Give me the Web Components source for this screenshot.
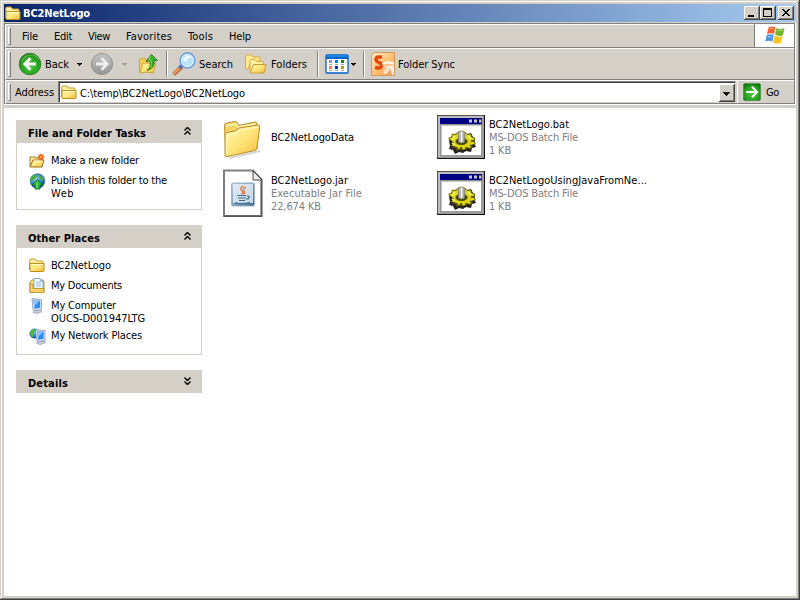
<!DOCTYPE html>
<html lang="en"><head><meta charset="utf-8"><title>BC2NetLogo</title>
<style>
html,body{margin:0;width:800px;height:600px;overflow:hidden;background:#d4d0c8}
body{font:11px/13px "DejaVu Sans Condensed","DejaVu Sans",sans-serif;font-stretch:condensed;color:#000;cursor:default}
</style></head><body>
<xp-window></xp-window>
<script>
const GEAR = `<path fill="#9c9c9c" d="M0 0h48v44H0z"/><path d="M0 44V0h48" fill="none" stroke="#555" stroke-width="2"/><path d="M48 0v44H0" fill="none" stroke="#111" stroke-width="2"/><path d="M2 42V2h44" fill="none" stroke="#ddd"/><path fill="#fff" d="M4 10h40v30H4z"/><path fill="#000084" d="M3 3h42v6H3z"/><path fill="#c6c6c6" d="M32 4.500h3v3h-3zM37 4.500h3v3h-3zM42 4.500h2.500v3H42z"/><path d="M4 40V10h41" stroke="#888" fill="none"/><path fill="#222" d="M12 25l3-4 3-2 6-2 7 2 3-1 2 4 2 2-1 4 2 4-4 1-1 4-5-1-3 2-4-1-4 2-2-4-4-1 1-3z"/><path fill="#dcd418" stroke="#5e5800" stroke-width=".8" d="M11.500 23l3.500-1 0-3 4 .5 2-2.500h7l2 2.500 4-.5.500 3 3.500 1-1.500 3 2 3-4 1-.5 3.500-4.500-1-2.500 2.500-3-1.500-4 1.500-1.500-3-4-1 1.500-3.500z"/><path d="M15 25l3-4M31 21l3 3M15 28l3 2" stroke="#fff86a" stroke-width="1.500"/><ellipse cx="24.500" cy="26.500" rx="6" ry="3.500" fill="#4a4600"/><path d="M17 31l-1 3M20 32v4M24 32v4M29 32l1 3M33 30l3 2M34 26h4" stroke="#4d480a" stroke-width="1.400"/><path fill="#d0d0d0" stroke="#777" stroke-width=".8" d="M21.500 19q0-3 3-3t3 3v8q-3 2-6 0z"/><path d="M26.300 18v9M23 19v8" stroke="#999" stroke-width=".8"/><path d="M24.500 17v10" stroke="#fff"/>`;
const FOLD = `<path fill="#fff0a0" stroke="#c39a2b" d="M.7 12V2.200Q.7 1 2 1h4l1.500 2H13q1 0 1 1v2"/><path fill="url(#y)" stroke="#bd8d19" d="M1 13V5.500h14V12.500q0 1-1.200 1H1.500z"/><path d="M2 6.500h12" stroke="#fffbd0"/>`;
const DEF = `<defs><linearGradient id="y" x1="0" y1="0" x2="1" y2="1"><stop stop-color="#fff9b0"/><stop offset=".5" stop-color="#ffe57a"/><stop offset="1" stop-color="#f0b93c"/></linearGradient><radialGradient id="g" cx=".5" cy=".6" r=".65"><stop stop-color="#4cc83c"/><stop offset=".65" stop-color="#28a020"/><stop offset="1" stop-color="#157012"/></radialGradient><linearGradient id="s" x1="0" y1="0" x2="0" y2="1"><stop stop-color="#c4c4c4"/><stop offset="1" stop-color="#969696"/></linearGradient><radialGradient id="w" cx=".4" cy=".35" r=".7"><stop stop-color="#9fd4ff"/><stop offset=".6" stop-color="#2975d0"/><stop offset="1" stop-color="#123f99"/></radialGradient><linearGradient id="o" x1="0" y1="0" x2="1" y2="1"><stop stop-color="#fff0d5"/><stop offset=".5" stop-color="#ffc478"/><stop offset="1" stop-color="#f7913d"/></linearGradient><linearGradient id="b" x1="0" y1="0" x2="1" y2="1"><stop stop-color="#b6cfe4"/><stop offset="1" stop-color="#3c6c94"/></linearGradient></defs>`;
const SCREEN = `<path fill="#c9cfdd" stroke="#8993ad" stroke-width=".7" d="M5 12.500l6-1 2 2-5 2-4-1z"/><path fill="#e8ebf5" stroke="#7983a5" stroke-width=".7" d="M3 .5l9.500 1.200V11.500L6 12.500 4 11.500z"/><path fill="#2d8df5" d="M4.200 1.800l7 1v7L5.700 11z"/><path fill="#86c8ff" d="M4.500 2l6.300.8-5.400 5.200z"/>`;
const ICONS = {
 folder:[16,15,FOLD],
 back:[24,24,`<circle cx="12" cy="12" r="10.800" fill="url(#g)" stroke="#28782b" stroke-width=".8"/><path d="M4 9q3-6 9-6t8 5" fill="none" stroke="#8edb80" stroke-width="1.200" opacity=".6"/><path d="M12.500 6.300L6.900 12l5.600 5.700M7.500 12H18" fill="none" stroke="#fff" stroke-width="3"/>`],
 fwd:[24,24,`<circle cx="12" cy="12" r="10.600" fill="url(#s)" stroke="#888" stroke-width=".8"/><path d="M11.500 6.300L17.100 12l-5.600 5.700M16.500 12H6" fill="none" stroke="#eee" stroke-width="2.800"/>`],
 up:[20,22,`<path fill="#f5cf55" stroke="#d0a23a" d="M1.500 19V6l5-1 1 2 8-1v13z"/><path fill="url(#y)" stroke="#d0a23a" d="M2 20l3-10 13 .5L15 20q-6-2-13 0z"/><path fill="#39ae29" stroke="#197018" stroke-width=".8" d="M9 17.500q4.500-3 3-9.500L8 8.500l5.500-7 6 6-3.500.4Q17.500 15 9 17.500z"/><path d="M13.300 3l-3 4 2.800.2q1 4-.5 8" fill="none" stroke="#8ade65" stroke-width=".8"/>`],
 search:[24,24,`<path d="M10 14.500l-8.300 7.800" stroke="#a95d35" stroke-width="4"/><path d="M9.500 14.500l-8 7.400" stroke="#ee9b60" stroke-width="2.500"/><path d="M7 16l3.500-3.200" stroke="#4971b9" stroke-width="3"/><circle cx="15.500" cy="8.500" r="7.400" fill="#b9e2ff" stroke="#6d9cd9" stroke-width="1.500"/><circle cx="15.500" cy="8.500" r="6" fill="none" stroke="#e7f8ff"/><path d="M11 8q1-4 5-4 3 0 4 2-4-1-5 2-1 3-4 0z" fill="#fff" opacity=".85"/>`],
 folders:[22,22,`<path fill="#ffe988" stroke="#d6ac45" d="M.5 16V3l1-1h5l1.500 2h7v4L6 9 3 16z"/><path fill="#fff0a0" stroke="#d6ac45" d="M5 18V7.500l1-1h4l1.500 2h6.500v3"/><path fill="url(#y)" stroke="#cc9d32" d="M5 20L8.500 11.500h12.500L19 20z"/>`],
 views:[24,20,`<rect x="1" y="1" width="22" height="18" rx="1" fill="#fff" stroke="#0060c8" stroke-width="1.300"/><path fill="#0068d0" d="M1 1h22v4H1z"/><path d="M2 2h20" stroke="#3ba0f0"/><path fill="#9898c8" d="M4 6h3v3H4z"/><path fill="#0080e0" d="M10 6h3v3h-3z"/><path fill="#009800" d="M16 6h3v3h-3z"/><path fill="#ff7840" d="M4 12h3v3H4z"/><path fill="#0038a0" d="M10 12h3v3h-3z"/><path fill="#c89800" d="M16 12h3v3h-3z"/><path d="M4 10.500h3m3 0h3m3 0h3M4 16.500h3m3 0h3m3 0h3" stroke="#aaa"/>`],
 sync:[24,24,`<path d="M.5 4Q1 1 4 .5h19.500v23H.500z" fill="url(#o)" stroke="#d79a5b"/><path d="M11 5.300Q4.800 4 5 7.500q.1 2 3 3 3 1 2.800 3.300-.4 3.200-6.800 1.600" fill="none" stroke="#e24c0c" stroke-width="3.600"/><path d="M11 11l6-2 6 1v3l-5-1-6 2zM12 15l9-2 2 1v9h-2l-2-6-4 5-3-1 4-6-4 1z" fill="#fff" opacity=".85"/><path d="M12 13l6-1 4 2M14 20l4-5M19 16l2 6" stroke="#f3b77c" stroke-width=".8" fill="none"/>`],
 go:[18,18,`<rect x=".5" y=".5" width="17" height="17" rx="1.500" fill="url(#g)" stroke="#4c9a50"/><path d="M9 3.800l5 5.200-5 5.200M13.500 9H3" fill="none" stroke="#fff" stroke-width="2.200"/>`],
 flag:[20,19,`<path fill="#ee6331" d="M3.500 1.500q4-2 7 0L9 8Q6 6.500 2 8z"/><path fill="#73b52b" d="M11.500 2q3.500 2 8 0L18 9q-4 2-8-.5z"/><path fill="#4b91e5" d="M1.800 9q4-1.700 7 0L7.300 15.500Q4 14 .3 15.500z"/><path fill="#f9c623" d="M9.800 9.500q4 2 8 .5L16 17q-4 2-8-.8z"/><path d="M4 3q3-1.500 5 0" stroke="#ffa17b" fill="none"/><path d="M12 4q3 1 6 0" stroke="#b2dc71" fill="none"/><path d="M3 11q2-1 4 0" stroke="#a3cfff" fill="none"/>`],
 newf:[17,16,`<path fill="#ffeda0" stroke="#a47a24" d="M1 13V4h5l1 1h6v3"/><path fill="url(#y)" stroke="#9a7020" d="M1 14L4 7h11l-2 7z"/><path d="M5 8h8" stroke="#fffbe0"/><path fill="#f25d22" d="M12 0l1 2 2-1-1 2 2 1-2 1 1 2-2-1-1 2-1-2-2 1 1-2-2-1 2-1-1-2 2 1z"/><circle cx="12" cy="4" r="1" fill="#ffd04d"/>`],
 web:[17,17,`<circle cx="8.500" cy="8" r="7.300" fill="url(#w)" stroke="#204e94" stroke-width=".6"/><path fill="#4bae43" d="M3 3l4-2 2 2-3 3-3 2-1 3q-2-4 1-8zM11 2q4 2 4 6l-3-1-2-3z"/><path fill="#2ab532" stroke="#0b6516" stroke-width=".8" d="M6 16v-4H3l5.500-5.500L14 12h-3v4z"/><path d="M8 9v6" stroke="#86ec78"/>`],
 docs:[17,16,`<path fill="#ffe784" stroke="#b78b21" d="M1 14V4l2-2h11l1 2v10z"/><path fill="#f4faff" stroke="#6395c8" stroke-width=".8" d="M5 .5h6l3 3V12H5z"/><path fill="#8abdf0" d="M11 1v3h3z"/><path d="M7 4h4M7 6h5M7 8h5" stroke="#79a9df" stroke-width=".8"/><path fill="#f7d369" stroke="#b78b21" stroke-width=".8" d="M1 14.500V6h3v4.500h11v4z"/>`],
 comp:[16,16,SCREEN],
 net:[17,17,`<circle cx="5.500" cy="5.500" r="5" fill="url(#w)"/><path fill="#4bb844" d="M1 4l3-3 3 1-2 3-1 4-2-1z"/><g transform="translate(3.500 1)">${SCREEN}</g>`],
 big:[48,48,`<path fill="#bbb" opacity=".6" d="M9 44l32-7v2L11 46z"/><path fill="#f5d365" stroke="#b38a2c" d="M5.500 12.500q0-2 2-2.500l9-1.500q1.500 0 2.300 2l1 2L36 9q2 0 2 2v24L7 43z"/><path d="M7 13l10-2 2 3 17-3" fill="none" stroke="#fff6bb" stroke-width="1.500"/><path fill="url(#y)" stroke="#b98c26" d="M6 43V22q0-2 2-2.500l8-1.500 4-3 19-3q2 0 1.700 2L38 35q0 2-2 2.500L8 43.500q-2 .5-2-.5z"/><path d="M8 41V22l9-2 4-3 18-3" fill="none" stroke="#fffbd0" stroke-width="1.200"/>`],
 jar:[48,48,`<path fill="#fff" stroke="#808080" stroke-width="2" d="M5 1.500h29l8.500 9V47H5z"/><path d="M42.500 11v36.300H5" stroke="#555" stroke-width="1.400" fill="none"/><path fill="#eee" stroke="#444" d="M34 2v9h9z"/><rect x="12.500" y="14" width="23" height="23" rx="1.500" fill="url(#b)" stroke="#9ab5cb"/><rect x="14" y="15" width="20" height="19" fill="#edf3f8" opacity=".78"/><path d="M24 17q-4 3-1 5 2 2-1 3M27 18q-4 2-2 4 2 2-1 3" fill="none" stroke="#e4733b" stroke-width="1.300"/><path d="M18 26.500h9M19 29h8M20 31.500h6M28 27q4 0 1 3h-2M16 33.500q6 2 15 0" fill="none" stroke="#426a91" stroke-width="1.200"/>`],
 bat:[48,44,GEAR]
};
const def=(n,html)=>customElements.define(n,class extends HTMLElement{connectedCallback(){if(!this.shadowRoot)this.attachShadow({mode:'open'}).innerHTML=html(this)}});
def('xp-icon',e=>{const [w,h,p]=ICONS[e.getAttribute('name')];return `<style>:host{display:block;flex:none}svg{display:block}</style><svg width="${w}" height="${h}" viewBox="0 0 ${w} ${h}">${DEF}${p}</svg>`});
/* A text line whose tracking is adjusted to a given advance width. */
customElements.define('xp-text',class extends HTMLElement{connectedCallback(){
 this.attachShadow({mode:'open'}).innerHTML='<style>:host{display:block;white-space:nowrap;flex:none;height:13px}span{display:inline-block}</style><span><slot></slot></span>';
 const w=+this.getAttribute('w');this.style.width=w+'px';
 const s=this.shadowRoot.querySelector('span'),n=this.textContent.length;
 s.style.letterSpacing=((w-s.getBoundingClientRect().width)/n).toFixed(3)+'px';
}});
def('xp-arrow',e=>`<style>:host{display:block;flex:none;width:5px;height:3px}svg{display:block}</style><svg width="5" height="3" shape-rendering="crispEdges"><path fill="${e.getAttribute('color')||'#000'}" d="M0 0h5v1H0zM1 1h3v1H1zM2 2h1v1H2z"/></svg>`);
def('xp-sep',()=>`<style>:host{display:block;flex:none;width:1px;height:26px;background:#808080;border-right:1px solid #fff}</style>`);
def('xp-button',e=>{const g={min:'<path d="M4 9h6v2H4z"/>',max:'<path fill-rule="evenodd" d="M3 2h9v9H3zM4 4v6h7V4z"/>',close:'<path d="M4 3h2v1h1v1h2V4h1V3h2v1h-1v1h-1v1H9v1h1v1h1v1h1v1h-2V9H9V8H7v1H6v1H4V9h1V8h1V7h1V6H6V5H5V4H4z"/>',drop:'<path d="M4 8h7v1H4zM5 9h5v1H5zM6 10h3v1H6zM7 11h1v1H7z"/>'}[e.getAttribute('kind')];
 return `<style>:host{display:block;box-sizing:border-box;flex:none;width:16px;height:14px;background:#d4d0c8;box-shadow:inset -1px -1px #404040,inset 1px 1px #fff,inset -2px -2px #808080}svg{display:block}</style><svg width="16" height="14" shape-rendering="crispEdges">${g}</svg>`});
def('xp-bar',()=>`<style>:host{display:flex;box-sizing:border-box;position:relative;align-items:center;border-left:1px solid #fff;border-top:1px solid #fff;border-bottom:1px solid #808080}i{box-sizing:border-box;flex:none;width:3px;border:1px solid #808080;border-left-color:#fff;border-top-color:#fff;align-self:stretch;margin:2px 0 2px 2px}</style><i></i><slot></slot>`);
def('xp-panel',e=>{const o=e.hasAttribute('open');return `<style>:host{display:block}header{display:flex;box-sizing:border-box;height:23px;padding:3px 11px 0 12px;align-items:center;justify-content:space-between;background:#d4d0c8;font-weight:bold}section{display:${o?'grid':'none'};row-gap:7px;padding:11px 11px 12px 12px;border:1px solid #d4d0c8;border-top:0}svg{margin-top:-5px}</style><header><xp-text w="${e.getAttribute('w')}">${e.getAttribute('heading')}</xp-text><svg width="7" height="8" viewBox="0 0 7 8"><g fill="none" stroke="#000" stroke-width="1.400" ${o?'':'transform="rotate(180 3.5 4)"'}><path d="M.5 3.500l3-3 3 3M.5 7.500l3-3 3 3"/></g></svg></header><section><slot></slot></section>`});
def('xp-link',e=>`<style>:host{display:grid;grid-template-columns:22px auto}:host([double]){margin-bottom:-3px}xp-icon{margin-top:-1px;height:13px;overflow:visible}</style><xp-icon name="${e.getAttribute('icon')}"></xp-icon><div><slot></slot></div>`);
def('xp-file',e=>`<style>:host{display:flex;height:48px;align-items:center}.i{display:grid;place-items:center;width:48px;height:48px;margin-right:4px}.t{color:#808080}::slotted(:first-child){color:#000}</style><div class="i"><xp-icon name="${e.getAttribute('icon')}"></xp-icon></div><div class="t"><slot></slot></div>`);
def('xp-window',()=>`<style>
:host{display:flex;flex-direction:column;box-sizing:border-box;width:800px;height:600px;padding:4px;background:#d4d0c8;box-shadow:inset -1px -1px #404040,inset 1px 1px #d4d0c8,inset -2px -2px #808080,inset 2px 2px #fff}
.title{display:flex;align-items:center;height:18px;padding:0 2px 0 1px;background:linear-gradient(90deg,#0a246a,#a6caf0);color:#fff;font-weight:bold;margin-bottom:1px}
.title xp-text{margin:1px auto 0 2px}.title xp-button{height:14px}.title xp-button:last-child{margin-left:2px}
.rebar{border-left:1px solid #808080;border-right:1px solid #808080;border-top:1px solid #808080;box-shadow:1px 0 #fff;margin-right:1px;height:80px}
.menu{height:24px}.menu .m{display:flex;align-items:center;height:22px;padding-left:11px;gap:16px}
.flag{margin-left:auto;display:grid;place-items:center;width:39px;height:23px;background:#fff;border-left:1px solid #808080;align-self:flex-start;margin-top:-1px}
.tools{height:32px}.tools>*{flex:none}
.addr{height:24px}.combo{display:flex;box-sizing:border-box;align-items:center;width:678px;height:22px;margin-left:5px;background:#fff;border-top:1px solid #808080;border-left:1px solid #808080;border-bottom:1px solid #d4d0c8;border-right:1px solid #d4d0c8;box-shadow:inset 1px 1px #404040;padding-left:2px}
.combo xp-button{margin:1px 0 0 auto;height:18px}
.bottom{height:1px;background:#fff;margin-bottom:3px}
main{flex:1;display:grid;grid-template-columns:215px 1fr;background:#fff}
aside{padding:12px 17px 0 12px;display:grid;align-content:start;row-gap:15px}
.files{display:grid;grid-template-columns:218px 218px;grid-auto-rows:48px;row-gap:8px;align-content:start;padding-top:5px}
</style>
<div class="title"><xp-icon name="folder"></xp-icon><xp-text w="67">BC2NetLogo</xp-text><xp-button kind="min"></xp-button><xp-button kind="max"></xp-button><xp-button kind="close"></xp-button></div>
<div class="rebar">
<xp-bar class="menu"><div class="m"><xp-text w="16">File</xp-text><xp-text w="18">Edit</xp-text><xp-text w="22">View</xp-text><xp-text w="46">Favorites</xp-text><xp-text w="25">Tools</xp-text><xp-text w="22">Help</xp-text></div><div class="flag"><xp-icon name="flag"></xp-icon></div></xp-bar>
<xp-bar class="tools"><xp-icon name="back" style="margin-left:7px"></xp-icon><xp-text w="24" style="margin-left:3px">Back</xp-text><xp-arrow style="margin-left:8px"></xp-arrow><xp-icon name="fwd" style="margin-left:8px"></xp-icon><xp-arrow color="#999" style="margin-left:8px"></xp-arrow><xp-icon name="up" style="margin-left:11px"></xp-icon><xp-sep style="margin-left:8px"></xp-sep><xp-icon name="search" style="margin-left:4px"></xp-icon><xp-text w="34" style="margin-left:3px">Search</xp-text><xp-icon name="folders" style="margin-left:12px"></xp-icon><xp-text w="36" style="margin-left:4px">Folders</xp-text><xp-sep style="margin-left:10px"></xp-sep><xp-icon name="views" style="margin-left:6px"></xp-icon><xp-arrow style="margin-left:2px"></xp-arrow><xp-sep style="margin-left:7px"></xp-sep><xp-icon name="sync" style="margin-left:6px"></xp-icon><xp-text w="57" style="margin-left:3px">Folder Sync</xp-text></xp-bar>
<xp-bar class="addr"><xp-text w="39" style="margin-left:4px">Address</xp-text><div class="combo" style="margin-left:4px"><xp-icon name="folder"></xp-icon><xp-text w="165" style="margin:2px 0 0 3px">C:\\temp\\BC2NetLogo\\BC2NetLogo</xp-text><xp-button kind="drop"></xp-button></div><xp-sep style="height:22px;background:none"></xp-sep><xp-icon name="go" style="margin-left:5px"></xp-icon><xp-text w="13" style="margin-left:5px">Go</xp-text></xp-bar>
</div><div class="bottom"></div>
<main><aside>
<xp-panel heading="File and Folder Tasks" w="118" open><xp-link icon="newf"><xp-text w="88">Make a new folder</xp-text></xp-link><xp-link icon="web" double><xp-text w="116">Publish this folder to the</xp-text><xp-text w="23">Web</xp-text></xp-link></xp-panel>
<xp-panel heading="Other Places" w="72" open><xp-link icon="folder"><xp-text w="60">BC2NetLogo</xp-text></xp-link><xp-link icon="docs"><xp-text w="71">My Documents</xp-text></xp-link><xp-link icon="comp" double><xp-text w="65">My Computer</xp-text><xp-text w="94">OUCS-D001947LTG</xp-text></xp-link><xp-link icon="net"><xp-text w="91">My Network Places</xp-text></xp-link></xp-panel>
<xp-panel heading="Details" w="40"></xp-panel>
</aside><div class="files">
<xp-file icon="big"><xp-text w="83">BC2NetLogoData</xp-text></xp-file>
<xp-file icon="bat"><xp-text w="80">BC2NetLogo.bat</xp-text><xp-text w="89">MS-DOS Batch File</xp-text><xp-text w="22">1 KB</xp-text></xp-file>
<xp-file icon="jar"><xp-text w="77">BC2NetLogo.jar</xp-text><xp-text w="91">Executable Jar File</xp-text><xp-text w="50">22,674 KB</xp-text></xp-file>
<xp-file icon="bat"><xp-text w="158">BC2NetLogoUsingJavaFromNe...</xp-text><xp-text w="89">MS-DOS Batch File</xp-text><xp-text w="22">1 KB</xp-text></xp-file>
</div></main>`);
</script></body></html>
